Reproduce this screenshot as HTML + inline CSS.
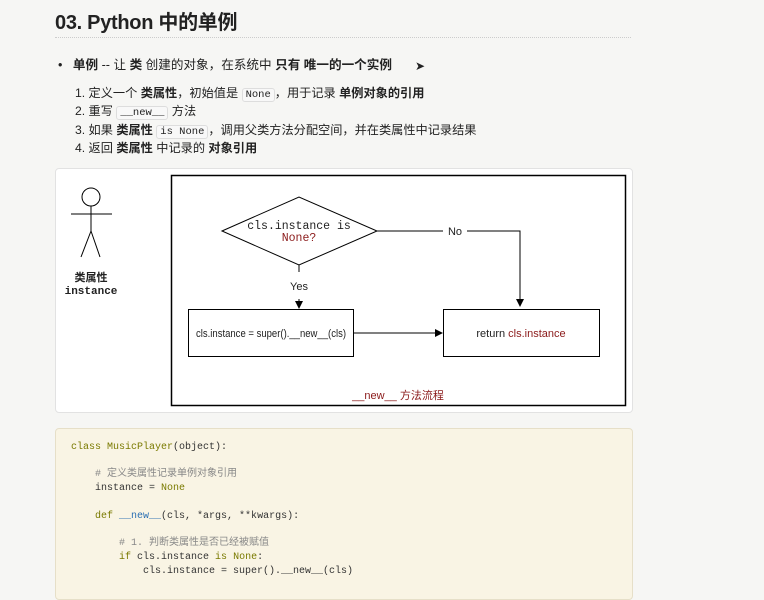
<!DOCTYPE html>
<html><head><meta charset="utf-8"><style>
body{margin:0;width:764px;height:590px;background:#f6f6f4;position:relative;overflow:hidden;font-family:"Liberation Sans","Noto Sans CJK SC",sans-serif;color:#222;}
.a{position:absolute;white-space:nowrap;}
.t{font-size:12px;line-height:16px;}
b{font-weight:bold;}
code{font-family:"Liberation Mono",monospace;font-size:10.5px;border:1px solid #ddd;background:#f8f8f8;border-radius:3px;padding:0 3px;}
.m{font-family:"Liberation Mono","Noto Sans CJK SC",monospace;font-size:10px;line-height:14px;color:#333;}
.k{color:#7a7a00}.f{color:#2a6fb3}.c{color:#888}.n{color:#7a7a00}
</style></head><body>
<div class="a" style="left:55px;top:10px;font-size:20px;font-weight:bold;line-height:26px;letter-spacing:-0.3px;">03. Python 中的单例</div>
<div class="a" style="left:55px;top:37px;width:576px;border-top:1px dotted #ccc;"></div>
<div class="a t" style="left:58px;top:57px;font-size:12.6px;">•&nbsp;&nbsp; <b>单例</b> -- 让 <b>类</b> 创建的对象，在系统中 <b>只有 唯一的一个实例</b></div>
<div class="a" style="left:415px;top:59px;font-size:12px;">➤</div>
<div class="a t" style="left:75px;top:85px;font-size:12.2px;">1. 定义一个 <b>类属性</b>，初始值是 <code>None</code>，用于记录 <b>单例对象的引用</b></div>
<div class="a t" style="left:75px;top:103px;font-size:12.2px;">2. 重写 <code>__new__</code> 方法</div>
<div class="a t" style="left:75px;top:122px;font-size:12.2px;">3. 如果 <b>类属性</b> <code>is None</code>，调用父类方法分配空间，并在类属性中记录结果</div>
<div class="a t" style="left:75px;top:140px;font-size:12.2px;">4. 返回 <b>类属性</b> 中记录的 <b>对象引用</b></div>

<div class="a" style="left:55px;top:168px;width:576px;height:243px;background:#fff;border:1px solid #e2e2e2;border-radius:4px;"></div>
<svg class="a" style="left:0;top:0" width="764" height="590">
<defs><marker id="ar" markerWidth="8" markerHeight="8" refX="7" refY="4" orient="auto"><path d="M0,0L8,4L0,8z" fill="#000"/></marker></defs>
<rect x="171.5" y="175.5" width="454" height="230" fill="none" stroke="#000" stroke-width="1.5"/>
<circle cx="91" cy="197" r="9" fill="none" stroke="#000"/>
<path d="M91 206V231M71 214H112M91 231L81 257M91 231L100 257" stroke="#000" fill="none"/>
<path d="M222 231L299 197L377 231L299 265Z" fill="#fff" stroke="#000"/>
<path d="M377 231H443M467 231H520V306" stroke="#000" fill="none" marker-end="url(#ar)"/>
<path d="M299 265V272" stroke="#000"/>
<path d="M299 299V308" stroke="#000" marker-end="url(#ar)"/>
<rect x="188.5" y="309.5" width="165" height="47" fill="#fff" stroke="#000"/>
<rect x="443.5" y="309.5" width="156" height="47" fill="#fff" stroke="#000"/>
<path d="M354 333H442" stroke="#000" marker-end="url(#ar)"/>
<g font-family="Liberation Mono,monospace" font-size="11.5" text-anchor="middle">
<text x="299" y="229" fill="#222">cls.instance is</text>
<text x="299" y="241" fill="#8b1a1a">None?</text>
</g>
<g font-family="Liberation Sans,sans-serif" font-size="11" fill="#222">
<text x="455" y="235" text-anchor="middle">No</text>
<text x="299" y="290" text-anchor="middle">Yes</text>
<text x="196" y="337" font-size="11" textLength="150" lengthAdjust="spacingAndGlyphs">cls.instance = super().__new__(cls)</text>
<text x="521" y="337" text-anchor="middle">return <tspan fill="#8b1a1a">cls.instance</tspan></text>
<text x="398" y="399" text-anchor="middle" fill="#8b1a1a" font-family="Liberation Sans,Noto Sans CJK SC,sans-serif">__new__ 方法流程</text>
</g>
<g font-size="11" font-weight="bold" text-anchor="middle" fill="#222">
<text x="91" y="281" font-family="Noto Sans CJK SC,sans-serif">类属性</text>
<text x="91" y="294" font-family="Liberation Mono,monospace">instance</text>
</g>
</svg>

<div class="a" style="left:55px;top:428px;width:576px;height:170px;background:#f9f4e4;border:1px solid #e6dfc8;border-radius:4px;"></div>
<div class="a m" style="left:71px;top:441px;"><span class="k">class</span> <span class="n">MusicPlayer</span>(object):</div>
<div class="a m c" style="left:95px;top:468px;"># 定义类属性记录单例对象引用</div>
<div class="a m" style="left:95px;top:482px;">instance = <span class="k">None</span></div>
<div class="a m" style="left:95px;top:510px;"><span class="k">def</span> <span class="f">__new__</span>(cls, *args, **kwargs):</div>
<div class="a m c" style="left:119px;top:537px;"># 1. 判断类属性是否已经被赋值</div>
<div class="a m" style="left:119px;top:551px;"><span class="k">if</span> cls.instance <span class="k">is</span> <span class="k">None</span>:</div>
<div class="a m" style="left:143px;top:565px;">cls.instance = super().__new__(cls)</div>
</body></html>
